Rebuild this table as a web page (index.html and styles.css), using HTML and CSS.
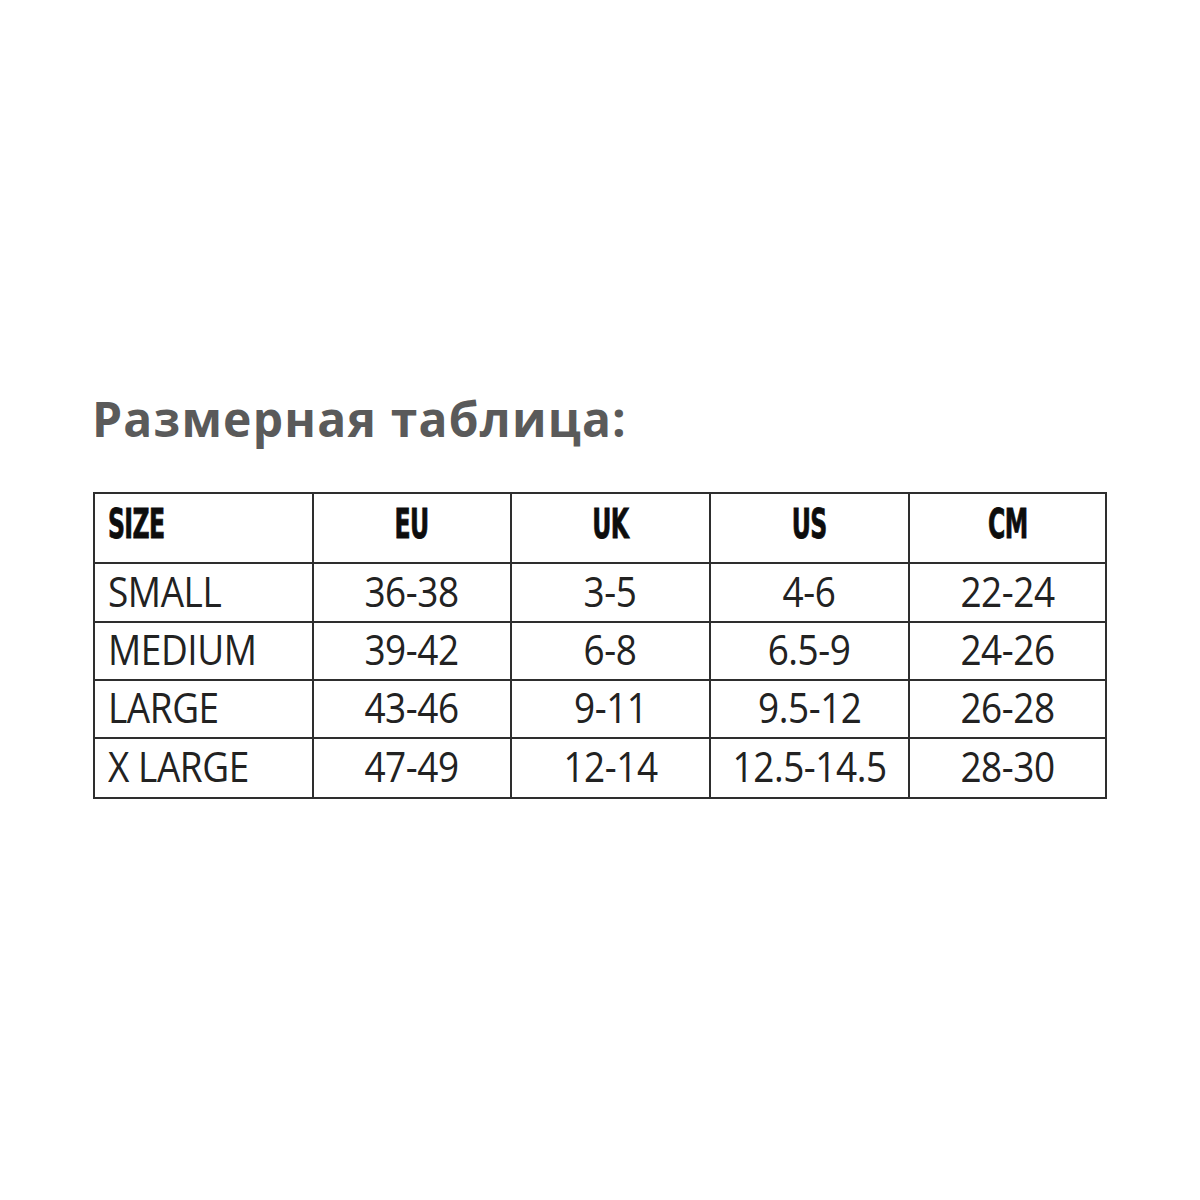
FILE: index.html
```html
<!DOCTYPE html>
<html lang="ru">
<head>
<meta charset="utf-8">
<title>Размерная таблица</title>
<link rel="stylesheet" href="styles.css">
</head>
<body>
<main class="page">
  <h1 class="title">Размерная таблица:</h1>
  <table class="sizes">
    <colgroup>
      <col class="c1"><col class="c2"><col class="c3"><col class="c4"><col class="c5">
    </colgroup>
    <thead>
      <tr class="head">
        <th class="first"><span class="cond">SIZE</span></th>
        <th><span class="cond">EU</span></th>
        <th><span class="cond">UK</span></th>
        <th><span class="cond">US</span></th>
        <th><span class="cond">CM</span></th>
      </tr>
    </thead>
    <tbody>
      <tr class="r1"><td class="first"><span class="nar">SMALL</span></td><td><span class="nar">36-38</span></td><td><span class="nar">3-5</span></td><td><span class="nar">4-6</span></td><td><span class="nar">22-24</span></td></tr>
      <tr class="r2"><td class="first"><span class="nar">MEDIUM</span></td><td><span class="nar">39-42</span></td><td><span class="nar">6-8</span></td><td><span class="nar">6.5-9</span></td><td><span class="nar">24-26</span></td></tr>
      <tr class="r3"><td class="first"><span class="nar">LARGE</span></td><td><span class="nar">43-46</span></td><td><span class="nar">9-11</span></td><td><span class="nar">9.5-12</span></td><td><span class="nar">26-28</span></td></tr>
      <tr class="r4"><td class="first"><span class="nar">X LARGE</span></td><td><span class="nar">47-49</span></td><td><span class="nar">12-14</span></td><td><span class="nar">12.5-14.5</span></td><td><span class="nar">28-30</span></td></tr>
    </tbody>
  </table>
</main>
</body>
</html>
```

FILE: styles.css
```css
html, body {
  margin: 0;
  padding: 0;
  background: #ffffff;
}
.page {
  width: 1200px;
  height: 1200px;
  padding: 390px 0 0 92px;
  box-sizing: border-box;
}
.title {
  margin: 0 0 44px 0;
  font-family: "Open Sans", "Noto Sans", sans-serif;
  font-weight: 700;
  font-size: 48px;
  line-height: 58px;
  color: #5a5a5a;
  letter-spacing: 1.2px;
}
.sizes {
  border-collapse: collapse;
  table-layout: fixed;
  width: 1012px;
  margin-left: 1px;
}
.c1 { width: 219px; }
.c2 { width: 198px; }
.c3 { width: 199px; }
.c4 { width: 199px; }
.c5 { width: 197px; }
.sizes th, .sizes td {
  border: 2px solid #2e2e2e;
  padding: 0 0 4px 0;
  text-align: center;
  vertical-align: middle;
  white-space: nowrap;
}
.sizes th { padding-bottom: 8px; }
.sizes .first {
  text-align: left;
  padding-left: 13px;
}
.head { height: 70px; }
.r1 { height: 59px; }
.r2 { height: 58px; }
.r3 { height: 58px; }
.r4 { height: 60px; }
.cond {
  display: inline-block;
  font-family: "DejaVu Sans Condensed", "DejaVu Sans", sans-serif;
  font-weight: 700;
  font-size: 41px;
  line-height: 48px;
  color: #0d0d0d;
  transform: scaleX(0.64);
  letter-spacing: -1px;
  -webkit-text-stroke: 0.8px #0d0d0d;
}
.first .cond { transform-origin: left center; }
.nar {
  display: inline-block;
  font-family: "Open Sans", "Noto Sans", sans-serif;
  font-weight: 400;
  font-size: 42px;
  line-height: 52px;
  color: #222222;
  transform: scaleX(0.88);
  letter-spacing: -0.5px;
}
.first .nar { transform-origin: left center; }
```
